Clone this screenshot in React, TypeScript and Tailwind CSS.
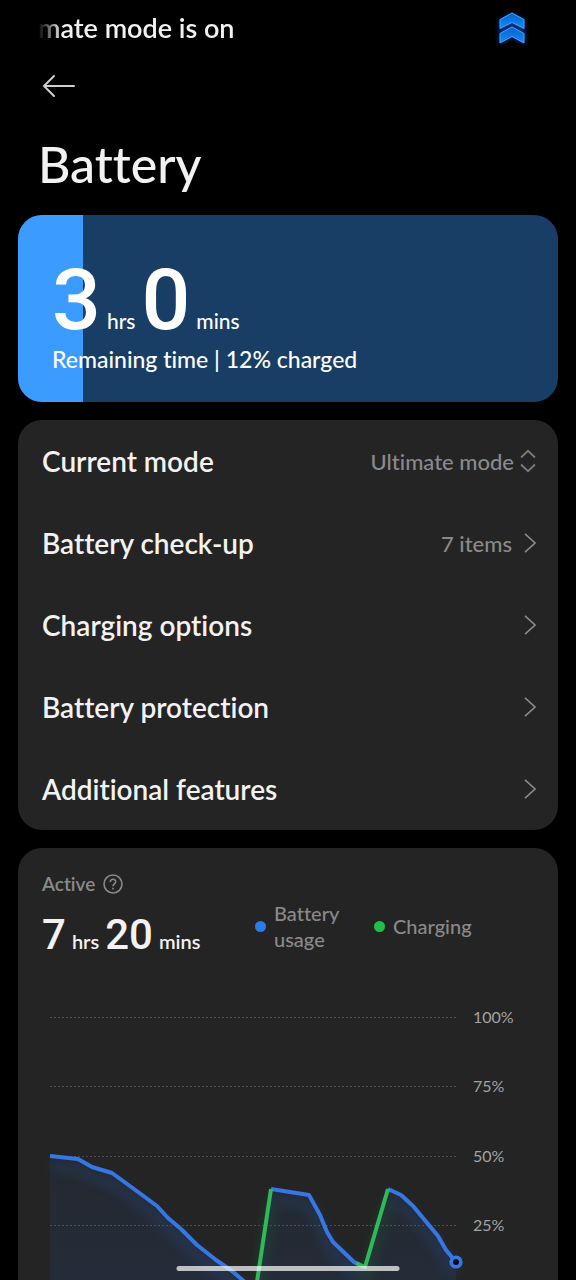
import { useState } from 'react';

const modes = ['Ultimate mode', 'Balanced mode', 'Battery saver'];

const menuItems = [
  { id: 'checkup', name: 'Battery check-up', value: '7 items' },
  { id: 'charging', name: 'Charging options' },
  { id: 'protection', name: 'Battery protection' },
  { id: 'features', name: 'Additional features' },
];

const gridLines = [
  { label: '100%', y: 17 },
  { label: '75%', y: 86 },
  { label: '50%', y: 156 },
  { label: '25%', y: 225 },
];

const usageLines = [
  '8,156 36,159 50,167 70,173 92,189 115,206 126,218 139,229 155,245 174,260 190,271 204,283 211,295',
  '229,189 267,195 278,215 285,232 291,242 312,262 318,265',
  '346,189 359,195 371,206 396,236 404,250 414,262',
];

const chargingLines = ['213,295 229,189', '314,263 323,267 346,189'];

const areas = [
  '8,156 36,159 50,167 70,173 92,189 115,206 126,218 139,229 155,245 174,260 190,271 204,283 211,295 8,295',
  '213,295 229,189 267,195 278,215 285,232 291,242 312,262 323,267 346,189 359,195 371,206 396,236 404,250 414,262 414,295',
];

function ChevronRight() {
  return (
    <svg className="h-5 w-3" viewBox="0 0 12 20" fill="none" stroke="#8a8a8a" strokeWidth="1.6" aria-hidden="true">
      <path d="M1 0.8 L11 10 L1 19.2" />
    </svg>
  );
}

function ModeBadge() {
  return (
    <svg className="h-9 w-8 overflow-visible" viewBox="0 0 32 36" aria-hidden="true">
      <defs>
        <filter id="badgeGlow" x="-50%" y="-50%" width="200%" height="200%">
          <feGaussianBlur stdDeviation="2.5" />
        </filter>
        <linearGradient id="badgeFill" x1="0" y1="0" x2="0" y2="1">
          <stop offset="0" stopColor="#0a62cc" />
          <stop offset="1" stopColor="#1489f5" />
        </linearGradient>
      </defs>
      <path d="M3 10 L16 3 L29 10 V34 L16 28 L3 34 Z" fill="#0a3fb0" opacity="0.7" filter="url(#badgeGlow)" />
      <g fill="url(#badgeFill)" stroke="#3fa9ff" strokeWidth="1" strokeLinejoin="round">
        <path d="M4 9.5 L16 3 L28 9.5 V18.5 L16 12.5 L4 18.5 Z" />
        <path d="M4 23.5 L16 17 L28 23.5 V33 L16 26.5 L4 33 Z" />
      </g>
    </svg>
  );
}

function UsageChart() {
  return (
    <svg className="block w-full" viewBox="0 0 492 330" role="img" aria-label="Battery level history">
      <defs>
        <linearGradient id="areaFill" x1="0" y1="0" x2="0" y2="1">
          <stop offset="0" stopColor="#2b6de0" stopOpacity="0.06" />
          <stop offset="1" stopColor="#2b6de0" stopOpacity="0.12" />
        </linearGradient>
        <filter id="lineGlow" x="-20%" y="-20%" width="140%" height="160%">
          <feGaussianBlur stdDeviation="6" />
        </filter>
      </defs>

      {gridLines.map((line) => (
        <g key={line.label}>
          <line x1="8" x2="414" y1={line.y + 0.5} y2={line.y + 0.5} stroke="#4c4c4c" strokeWidth="1" strokeDasharray="2 2" />
          <text x="431" y={line.y + 6} fill="#a3a3a3" fontSize="16">{line.label}</text>
        </g>
      ))}

      {areas.map((points) => (
        <polygon key={points} points={points} fill="url(#areaFill)" />
      ))}

      <g fill="none" strokeWidth="8" opacity="0.22" filter="url(#lineGlow)" transform="translate(0 10)">
        {usageLines.map((points) => (
          <polyline key={points} points={points} stroke="#2a62c0" />
        ))}
        {chargingLines.map((points) => (
          <polyline key={points} points={points} stroke="#1f8a3c" />
        ))}
      </g>

      <g fill="none" strokeWidth="4" strokeLinejoin="round">
        {usageLines.map((points) => (
          <polyline key={points} points={points} stroke="#3578e5" />
        ))}
        {chargingLines.map((points) => (
          <polyline key={points} points={points} stroke="#2dba58" />
        ))}
      </g>
      <circle cx="414" cy="262" r="4.8" fill="#04091f" stroke="#3578e5" strokeWidth="3.6" />
    </svg>
  );
}

export default function App() {
  const [mode, setMode] = useState(modes[0]);
  const charge = 12;

  return (
    <div className="relative flex h-dvh flex-col overflow-hidden bg-black font-['Lato',sans-serif] text-[#f2f2f2] [font-variant-ligatures:none]">
      <div className="flex h-14 shrink-0 items-center justify-between pl-[38px] pr-12">
        <p className="overflow-hidden whitespace-nowrap text-[27px] font-semibold leading-8 [mask-image:linear-gradient(to_right,transparent,black_24px)]">
          mate mode is on
        </p>
        <ModeBadge />
      </div>

      <main className="flex-1 overflow-y-auto [scrollbar-width:none]">
        <header className="px-[38px]">
          <button type="button" aria-label="Back" className="flex h-[60px] items-center pl-1">
            <svg className="h-6 w-9" viewBox="0 0 36 24" fill="none" stroke="#cfcfcf" strokeWidth="2" strokeLinecap="round" aria-hidden="true">
              <path d="M2 12 H32 M12 2 L2 12 L12 22" />
            </svg>
          </button>
          <h1 className="pb-[19px] pt-4 text-[50px] font-medium leading-[64px]">Battery</h1>
        </header>

        <div className="flex flex-col gap-[18px] px-[18px]">
          <section className="relative overflow-hidden rounded-3xl bg-[#193e65] px-[34px] pb-[27px] pt-[41px] text-white">
            <div className="absolute inset-y-0 left-0 bg-[#3c9bff]" style={{ width: `${charge}%` }} />
            <div className="relative">
              <p className="flex items-baseline gap-[6px] text-[21px] font-medium leading-none">
                <span className="font-['Roboto',sans-serif] text-[86px] leading-[88px]">3</span>
                hrs
                <span className="font-['Roboto',sans-serif] text-[86px] leading-[88px]">0</span>
                mins
              </p>
              <p className="text-[23px] font-medium leading-[31px]">Remaining time | {charge}% charged</p>
            </div>
          </section>

          <section className="rounded-3xl bg-[#242424] pl-6 pr-[22px]">
            <div className="flex h-[82px] items-center justify-between">
              <label htmlFor="mode" className="text-[28px] font-semibold">Current mode</label>
              <div className="flex items-center gap-[6px]">
                <select
                  id="mode"
                  value={mode}
                  onChange={(e) => setMode(e.target.value)}
                  className="appearance-none bg-transparent text-right text-[22px] font-medium text-[#8a8a8a] [field-sizing:content]"
                >
                  {modes.map((m) => (
                    <option key={m}>{m}</option>
                  ))}
                </select>
                <svg className="h-6 w-4" viewBox="0 0 16 24" fill="none" stroke="#7a7a7a" strokeWidth="1.8" aria-hidden="true">
                  <path d="M1 8.5 L8 1.8 L15 8.5 M1 15.5 L8 22.2 L15 15.5" />
                </svg>
              </div>
            </div>
            {menuItems.map((item) => (
              <button key={item.id} type="button" className="flex h-[82px] w-full items-center justify-between text-left">
                <span className="text-[28px] font-semibold">{item.name}</span>
                <span className="flex items-center gap-3 text-[22px] font-medium text-[#8a8a8a]">
                  {item.value}
                  <ChevronRight />
                </span>
              </button>
            ))}
          </section>

          <section className="rounded-t-3xl bg-[#242424] px-6 pt-6">
            <div className="flex items-center gap-2 text-[19px] font-semibold leading-6 text-[#8a8a8a]">
              Active
              <button type="button" aria-label="About active time">
                <svg className="block h-5 w-5" viewBox="0 0 20 20" fill="none" stroke="#8a8a8a" strokeWidth="1.6" aria-hidden="true">
                  <circle cx="10" cy="10" r="9" />
                  <path d="M7.3 8 C7.3 4.2 12.8 4.4 12.7 7.8 C12.6 9.8 10 9.9 10 12.2" />
                  <path d="M10 13.8 V15.6" />
                </svg>
              </button>
            </div>
            <div className="mt-1 flex h-[52px] items-center">
              <p className="flex w-[213px] items-baseline gap-[6px] self-end whitespace-nowrap text-[20px] font-semibold leading-none">
                <span className="font-['Roboto',sans-serif] text-[42px] font-medium leading-[34px]">7</span>
                hrs
                <span className="font-['Roboto',sans-serif] text-[42px] font-medium leading-[34px]">20</span>
                mins
              </p>
              <ul className="flex items-center gap-8 text-[20px] font-medium leading-[26px] text-[#8a8a8a]">
                <li className="flex w-[87px] items-center gap-2">
                  <span className="h-[11px] w-[11px] shrink-0 rounded-full bg-[#2d7bea]" />
                  Battery usage
                </li>
                <li className="flex items-center gap-2">
                  <span className="h-[11px] w-[11px] shrink-0 rounded-full bg-[#22c04b]" />
                  Charging
                </li>
              </ul>
            </div>
            <div className="pt-12">
              <UsageChart />
            </div>
          </section>
        </div>
      </main>

      <div className="absolute bottom-[9px] left-1/2 h-[5px] w-[223px] -translate-x-1/2 rounded-full bg-white/70" />
    </div>
  );
}
